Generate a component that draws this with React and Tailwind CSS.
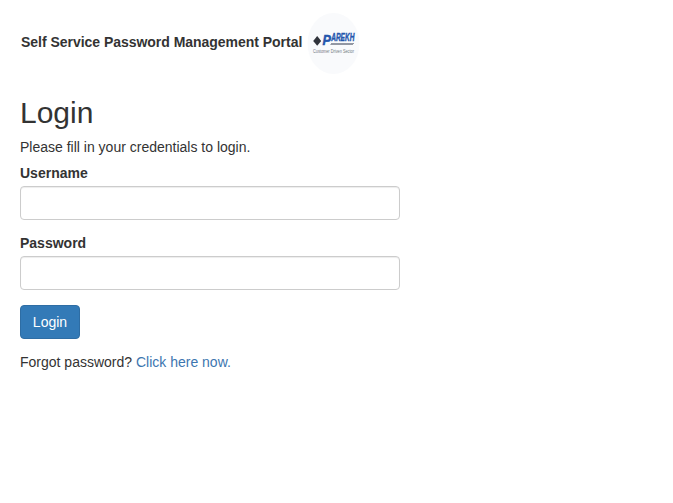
function Logo() {
  return (
    <svg className="block h-[62px] w-[54px] overflow-visible" viewBox="0 0 54 62" role="img" aria-label="Parekh">
      <ellipse cx="26.5" cy="31.5" rx="26" ry="30.5" fill="#f9fafc" />
      <path d="M10.2 24 L14.2 28.9 L10.2 33.8 L6.2 28.9 Z" fill="#30333b" />
      <path d="M24 31.5H47M23.4 32.5H46" stroke="#9297a3" strokeWidth="1" />
      <g fontFamily="'Liberation Sans', Arial, sans-serif">
        <text x="15.6" y="33.4" fontSize="15" fontWeight="700" fontStyle="italic" fill="#2456ad" stroke="#2456ad" strokeWidth="0.5" textLength="8.4" lengthAdjust="spacingAndGlyphs">P</text>
        <text x="24.2" y="29.4" fontSize="10" fontWeight="700" fontStyle="italic" fill="#2456ad" stroke="#2456ad" strokeWidth="0.4" textLength="23.2" lengthAdjust="spacingAndGlyphs">AREKH</text>
        <text x="6" y="40.6" fontSize="5" fill="#737984" textLength="41" lengthAdjust="spacingAndGlyphs">Customer Driven Sector</text>
      </g>
    </svg>
  );
}

function Field({ label, type }) {
  return (
    <div className="mb-[13px]">
      <label className="block font-bold">
        <span className="mb-[3px] block">{label}</span>
        <input
          type={type}
          className="block h-[34px] w-full rounded-[4px] border border-[#ccc] bg-white px-3 shadow-[inset_0_1px_1px_rgba(0,0,0,0.075)]"
        />
      </label>
    </div>
  );
}

export default function App() {
  return (
    <div className="h-[503px] overflow-hidden bg-white font-['Liberation_Sans',Arial,sans-serif] text-[14px] leading-[20px] text-[#333]">
      <header className="flex items-center pt-[12px] pl-[21px]">
        <span className="mr-[5px] -mt-[2px] font-bold tracking-[-0.03px] whitespace-nowrap">Self Service Password Management Portal</span>
        <Logo />
      </header>
      <main className="w-[400px] pt-[22px] pl-[20px]">
        <h2 className="mb-[8px] text-[30px] leading-[33px]">Login</h2>
        <p className="mb-[6px]">Please fill in your credentials to login.</p>
        <form onSubmit={(e) => e.preventDefault()}>
          <Field label="Username" type="text" />
          <Field label="Password" type="password" />
          <button className="mt-[15px] mb-[13px] block h-[34px] w-[60px] rounded-[4px] border border-[#2e6da4] bg-[#337ab7] text-white">
            Login
          </button>
          <p>
            Forgot password? <a href="#" className="text-[#3d76b0]">Click here now.</a>
          </p>
        </form>
      </main>
    </div>
  );
}
